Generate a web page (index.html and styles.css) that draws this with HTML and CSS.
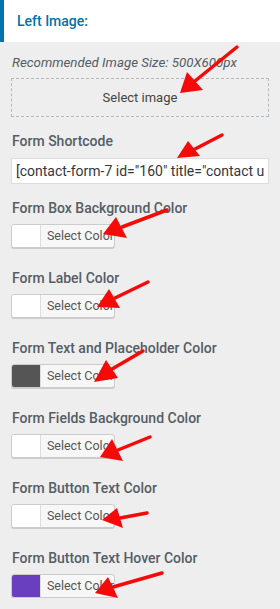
FILE: index.html
```html
<!DOCTYPE html>
<html>

<head>
  <title>Customizer - Left Image</title>
  <link rel="stylesheet" href="styles.css">
</head>

<body>
  <div class="panel">
    <h3 class="section-title">Left Image:</h3>

    <div class="controls">
      <span class="description">Recommended Image Size: 500X600px</span>
      <button class="image-picker" type="button">Select image</button>

      <div class="control">
        <label class="control-label" for="shortcode">Form Shortcode</label>
        <input class="text-input" type="text" id="shortcode" value='[contact-form-7 id="160" title="contact us"]'>
      </div>

      <!-- color pickers -->
      <div class="control">
        <span class="control-label">Form Box Background Color</span>
        <button class="color-btn" type="button"><span class="swatch swatch-white"></span><span class="color-text">Select Color</span></button>
      </div>

      <div class="control control-spaced">
        <span class="control-label">Form Label Color</span>
        <button class="color-btn" type="button"><span class="swatch swatch-white"></span><span class="color-text">Select Color</span></button>
      </div>

      <div class="control control-spaced">
        <span class="control-label">Form Text and Placeholder Color</span>
        <button class="color-btn" type="button"><span class="swatch swatch-dark"></span><span class="color-text">Select Color</span></button>
      </div>

      <div class="control control-spaced">
        <span class="control-label">Form Fields Background Color</span>
        <button class="color-btn" type="button"><span class="swatch swatch-white"></span><span class="color-text">Select Color</span></button>
      </div>

      <div class="control control-spaced">
        <span class="control-label">Form Button Text Color</span>
        <button class="color-btn" type="button"><span class="swatch swatch-white"></span><span class="color-text">Select Color</span></button>
      </div>

      <div class="control control-spaced">
        <span class="control-label">Form Button Text Hover Color</span>
        <button class="color-btn" type="button"><span class="swatch swatch-purple"></span><span class="color-text">Select Color</span></button>
      </div>
    </div>
  </div>

  <!-- red annotation arrows on top of the screenshot -->
  <svg class="arrows" width="280" height="609" viewBox="0 0 280 609">
    <g stroke="#f50a0a" stroke-width="3.5" stroke-linecap="round" fill="#f50a0a">
      <line x1="237" y1="47" x2="195" y2="81" />
      <polygon points="180,93 187,72 203,90" stroke="none" />

      <line x1="222" y1="135" x2="195" y2="149" />
      <polygon points="177,158 188,141 200,156" stroke="none" />

      <line x1="167" y1="210" x2="122" y2="227" />
      <polygon points="103,234 116,217 127,238" stroke="none" />

      <line x1="148" y1="282" x2="115" y2="298" />
      <polygon points="97,307 109,289 120,308" stroke="none" />

      <line x1="143" y1="351" x2="112" y2="369" />
      <polygon points="94,382 106,360 118,378" stroke="none" />

      <line x1="150" y1="437" x2="118" y2="450" />
      <polygon points="100,457 112,439 123,461" stroke="none" />

      <line x1="147" y1="513" x2="120" y2="518" />
      <polygon points="102,520 117,508 123,528" stroke="none" />

      <line x1="162" y1="573" x2="113" y2="587" />
      <polygon points="95,593 108,577 118,598" stroke="none" />
    </g>
  </svg>
</body>
</html>
```

FILE: styles.css
```css
body {
  margin: 0;
  background-color: #eeeeee;
  font-family: Roboto, "Liberation Sans", sans-serif;
  color: #555d66;
}

.panel {
  width: 280px;
}

.section-title {
  margin: 0;
  padding: 10px 14px 10px 13px;
  background-color: #ffffff;
  border-left: 4px solid #0073aa;
  color: #0073aa;
  font-size: 14px;
  font-weight: 500;
  line-height: 22px;
}

.controls {
  display: flex;
  flex-direction: column;
  padding: 12px 11px 0 11px;
}

.description {
  font-size: 13.3px;
  font-style: italic;
  line-height: 18px;
  color: #555d66;
  margin-left: 1px;
}

.image-picker {
  margin-top: 6px;
  height: 39px;
  width: 100%;
  background: transparent;
  border: 1px dashed #b4b9be;
  font-family: Roboto, "Liberation Sans", sans-serif;
  font-size: 13px;
  color: #444;
  padding: 0;
  cursor: pointer;
}

.control {
  display: flex;
  flex-direction: column;
  align-items: flex-start;
  gap: 6px;
  margin-top: 14px;
}

.control-spaced {
  margin-top: 20px;
}

.control-label {
  font-size: 14px;
  font-weight: 500;
  line-height: 20px;
  margin-left: 1px;
  color: #555d66;
}

.text-input {
  box-sizing: border-box;
  width: 100%;
  height: 26px;
  margin-top: 1px;
  padding: 0 4px;
  border: 1px solid #dddddd;
  background: #ffffff;
  font-family: Roboto, "Liberation Sans", sans-serif;
  font-size: 14px;
  color: #32373c;
  outline: none;
}

.color-btn {
  display: flex;
  align-items: stretch;
  box-sizing: border-box;
  width: 104px;
  height: 24px;
  padding: 0;
  border: 1px solid #cccccc;
  border-radius: 3px;
  box-shadow: 0 1px 0 #cccccc;
  background: #f7f7f7;
  overflow: hidden;
  cursor: pointer;
}

.swatch {
  width: 30px;
  border-right: 1px solid #dddddd;
}

.swatch-white {
  background: #ffffff;
}

.swatch-dark {
  background: #555555;
}

.swatch-purple {
  background: #6a3fbf;
}

.color-text {
  padding-left: 6px;
  font-family: Roboto, "Liberation Sans", sans-serif;
  font-size: 12.5px;
  line-height: 22px;
  color: #555555;
  white-space: nowrap;
}

.arrows {
  position: absolute;
  left: 0;
  top: 0;
  pointer-events: none;
}
```
